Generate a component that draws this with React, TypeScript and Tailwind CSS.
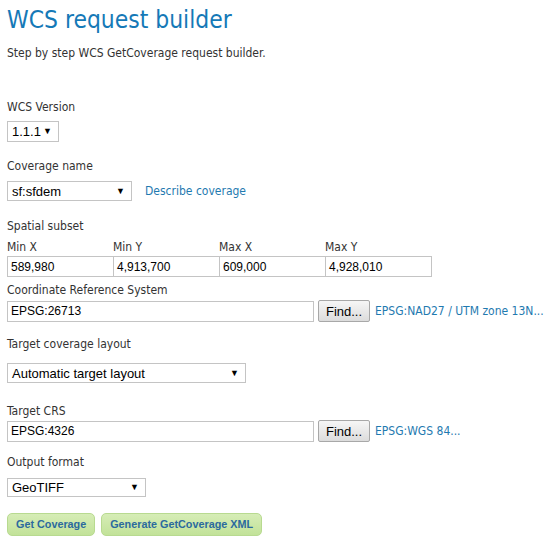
import React from 'react';

const label = "block h-[12px] text-[12px] text-[#333] leading-[12px] whitespace-nowrap";
const arial = "font-['Liberation_Sans',Arial,sans-serif]";
const input = `h-[21px] border border-[#c4c4c4] bg-white px-[3px] text-[12px] text-black ${arial} leading-none flex items-center`;

function Select({ value, width, height }: { value: string; width: string; height: string }) {
  return (
    <div className={`${width} ${height} border border-[#c4c4c4] bg-white pl-[4px] pr-[6px] text-[13px] text-black ${arial} leading-none flex items-center justify-between`}>
      <span>{value}</span>
      <span className="text-[9px]">▼</span>
    </div>
  );
}

function FindRow({ value, link }: { value: string; link: string }) {
  return (
    <div className="flex items-center">
      <div className={`${input} w-[307px]`}>{value}</div>
      <button className={`ml-[4px] h-[22px] w-[52px] rounded-[2px] border border-[#a8a8a8] bg-gradient-to-b from-[#f6f6f6] to-[#dcdcdc] text-[13px] ${arial} text-black leading-none`}>
        Find...
      </button>
      <span className="ml-[5px] text-[12px] text-[#1f7ab0] whitespace-nowrap">{link}</span>
    </div>
  );
}

const greenBtn = `h-[23px] px-[8px] rounded-[5px] border border-[#b8da90] bg-gradient-to-b from-[#d6edb6] to-[#c2e299] text-[10.8px] font-bold ${arial} text-[#2b6a9e] leading-none whitespace-nowrap`;

export default function App() {
  const bounds = [
    { name: 'Min X', value: '589,980' },
    { name: 'Min Y', value: '4,913,700' },
    { name: 'Max X', value: '609,000' },
    { name: 'Max Y', value: '4,928,010' },
  ];

  return (
    <div className="w-[560px] h-[544px] bg-white px-[7px] font-['DejaVu_Sans_Condensed','DejaVu_Sans',sans-serif] [font-stretch:condensed] overflow-hidden">
      <h1 className="pt-[5px] text-[24.4px] leading-[30px] text-[#1579b7] whitespace-nowrap">WCS request builder</h1>
      <p className="mt-[12px] text-[12px] leading-[12px] text-[#333] whitespace-nowrap">Step by step WCS GetCoverage request builder.</p>

      <div className="mt-[42px]">
        <span className={label}>WCS Version</span>
        <div className="mt-[8px]">
          <Select value="1.1.1" width="w-[52px]" height="h-[21px]" />
        </div>
      </div>

      <div className="mt-[18px]">
        <span className={label}>Coverage name</span>
        <div className="mt-[9px] flex items-center">
          <Select value="sf:sfdem" width="w-[125px]" height="h-[20px]" />
          <a className="ml-[13px] text-[12px] leading-[12px] text-[#1f7ab0]">Describe coverage</a>
        </div>
      </div>

      <div className="mt-[19px]">
        <span className={label}>Spatial subset</span>
        <div className="mt-[9px] flex">
          {bounds.map((b) => (
            <div key={b.name} className="w-[107px] -mr-px">
              <span className={label}>{b.name}</span>
              <div className={`${input} mt-[3px]`}>{b.value}</div>
            </div>
          ))}
        </div>
      </div>

      <div className="mt-[7px]">
        <span className={label}>Coordinate Reference System</span>
        <div className="mt-[4px]">
          <FindRow value="EPSG:26713" link="EPSG:NAD27 / UTM zone 13N..." />
        </div>
      </div>

      <div className="mt-[16px]">
        <span className={label}>Target coverage layout</span>
        <div className="mt-[13px]">
          <Select value="Automatic target layout" width="w-[239px]" height="h-[20px]" />
        </div>
      </div>

      <div className="mt-[22px]">
        <span className={label}>Target CRS</span>
        <div className="mt-[3px]">
          <FindRow value="EPSG:4326" link="EPSG:WGS 84..." />
        </div>
      </div>

      <div className="mt-[14px]">
        <span className={label}>Output format</span>
        <div className="mt-[10px]">
          <Select value="GeoTIFF" width="w-[139px]" height="h-[19px]" />
        </div>
      </div>

      <div className="mt-[16px] flex gap-[6px]">
        <button className={greenBtn}>Get Coverage</button>
        <button className={greenBtn}>Generate GetCoverage XML</button>
      </div>
    </div>
  );
}
